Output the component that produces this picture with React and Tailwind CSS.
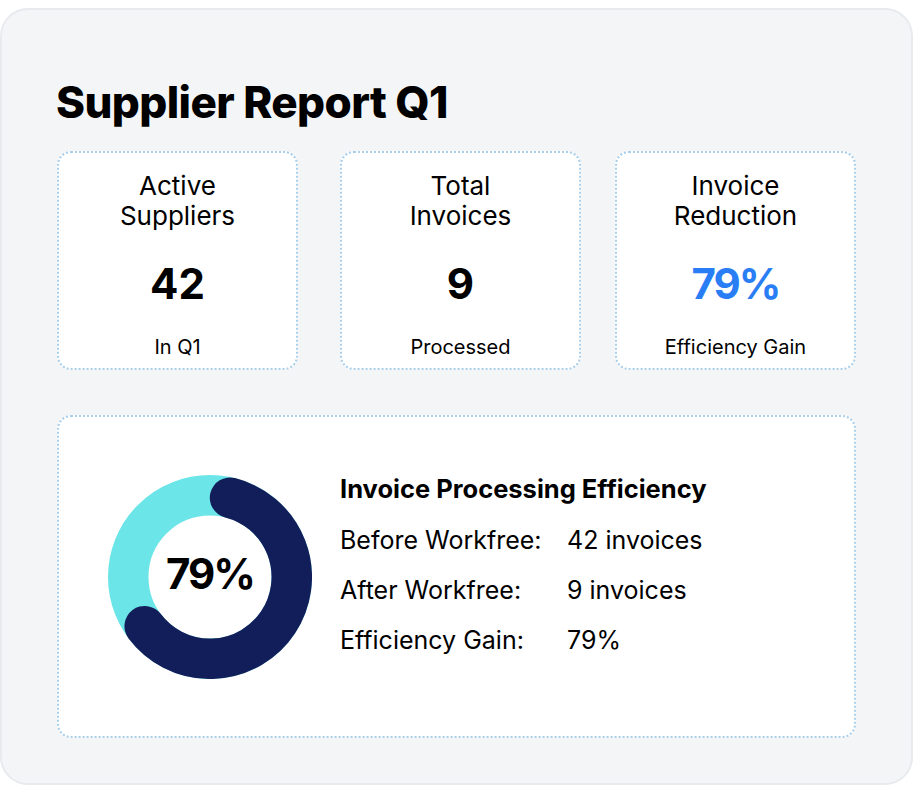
export default function App() {
  return (
    <div className="w-[914px] h-[786px] bg-white pt-2" style={{ fontFamily: "Inter, 'Noto Sans', sans-serif" }}>
      <div className="w-[913px] h-[777px] rounded-[28px] border-2 border-[#e8eaee] bg-[#f4f5f7] pl-[54px] pt-[70px]">
        <h1 className="text-[44px] leading-none font-extrabold tracking-[-0.6px] text-black">Supplier Report Q1</h1>

        <div className="mt-[27px] flex pl-px">
          <StatCard label={["Active", "Suppliers"]} value="42" note="In Q1" />
          <StatCard className="ml-[42px]" label={["Total", "Invoices"]} value="9" note="Processed" />
          <StatCard className="ml-[34px]" label={["Invoice", "Reduction"]} value="79%" note="Efficiency Gain" blue />
        </div>

        <div className="ml-px mt-[45px] flex h-[323px] w-[799px] items-center rounded-[14px] border-2 border-dotted border-[#a9cfeb] bg-white pl-[49px]">
          <Donut />
          <div className="ml-[28px] pb-[25px] text-black">
            <h2 className="text-[25.5px] leading-[30px] font-bold">Invoice Processing Efficiency</h2>
            <div className="mt-[21px] flex flex-col gap-[20px] text-[25px] leading-[30px]">
              <Row label="Before Workfree:" value="42 invoices" />
              <Row label="After Workfree:" value="9 invoices" />
              <Row label="Efficiency Gain:" value="79%" />
            </div>
          </div>
        </div>
      </div>
    </div>
  )
}

function StatCard({ label, value, note, blue, className = "" }) {
  return (
    <div className={`flex h-[219px] w-[241px] flex-col items-center rounded-[14px] border-2 border-dotted border-[#a9cfeb] bg-white pt-[18px] text-center text-black ${className}`}>
      <div className="text-[26px] leading-[30px]">
        {label[0]}
        <br />
        {label[1]}
      </div>
      <div className={`mt-[32px] text-[42px] leading-none font-bold ${blue ? "tracking-[-2px] text-[#2a7ef5]" : ""}`}>{value}</div>
      <div className="mt-[30px] text-[20px] leading-[24px]">{note}</div>
    </div>
  )
}

function Row({ label, value }) {
  return (
    <div className="flex">
      <span className="w-[227px]">{label}</span>
      <span>{value}</span>
    </div>
  )
}

function Donut() {
  return (
    <div className="relative h-[204px] w-[204px] shrink-0">
      <svg width="204" height="204" viewBox="0 0 204 204">
        <circle cx="102" cy="102" r="81.75" fill="none" stroke="#6be5e8" strokeWidth="40.5" />
        <path
          d="M122.05 22.75 A81.75 81.75 0 1 1 36.71 151.2"
          fill="none"
          stroke="#121e59"
          strokeWidth="40.5"
          strokeLinecap="round"
        />
      </svg>
      <div className="absolute inset-0 flex items-center justify-center pb-[6px] text-[42px] leading-none font-bold tracking-[-2px] text-black">
        79%
      </div>
    </div>
  )
}
